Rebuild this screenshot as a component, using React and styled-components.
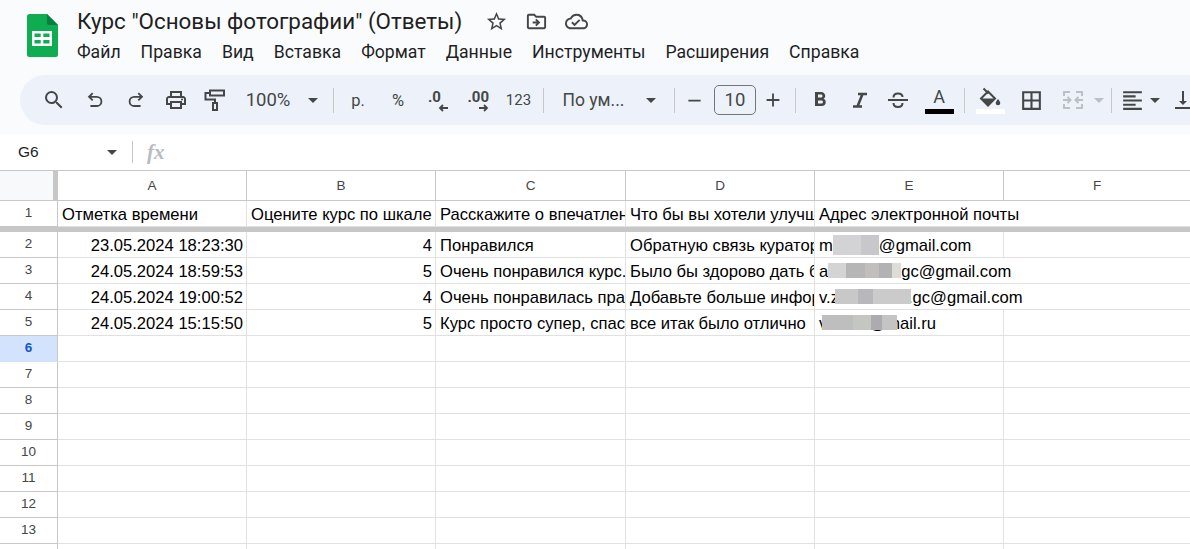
import React from 'react';
import styled, { createGlobalStyle } from 'styled-components';
import {
  MdSearch, MdOutlinePrint, MdFormatBold, MdBorderAll, MdFormatAlignLeft, MdVerticalAlignBottom,
  MdStarBorder, MdOutlineDriveFileMove, MdOutlineCloudDone, MdAdd, MdRemove,
} from 'react-icons/md';

const GlobalStyle = createGlobalStyle`
  html, body { margin: 0; padding: 0; height: 100%; overflow: hidden; background: #f9fbfd; }
  body { font-family: Roboto, "Liberation Sans", sans-serif; }
`;

const Page = styled.div`
  width: 1190px;
  height: 549px;
  overflow: hidden;
  display: flex;
  flex-direction: column;
`;

const Header = styled.header`
  height: 75px;
  display: flex;
  padding-left: 27px;
  flex-shrink: 0;
`;

const Logo = styled.svg`
  width: 31px;
  height: 43px;
  margin-top: 14px;
  flex-shrink: 0;
`;

const TitleBlock = styled.div`
  margin-left: 19px;
  display: flex;
  flex-direction: column;
`;

const TitleRow = styled.div`
  height: 42px;
  display: flex;
  align-items: center;
  color: #444746;
`;

const Title = styled.h1`
  margin: 0 14px 0 0;
  font-size: 22.4px;
  font-weight: 400;
  color: #1f1f1f;
  white-space: nowrap;
`;

const TitleIcon = styled.span`
  width: 40px;
  display: flex;
  justify-content: center;
  font-size: 23px;
  color: #444746;
`;

const Menu = styled.nav`
  display: flex;
  gap: 20px;
  font-size: 17.65px;
  color: #1f1f1f;
`;

const Toolbar = styled.div`
  height: 50px;
  margin-left: 20px;
  border-radius: 25px 0 0 25px;
  background: #edf2fa;
  display: flex;
  align-items: center;
  padding-left: 14px;
  flex-shrink: 0;
  color: #444746;
  white-space: nowrap;
  overflow: hidden;
`;

const Tool = styled.div`
  width: ${p => p.$w || 40}px;
  height: 30px;
  flex-shrink: 0;
  display: flex;
  align-items: center;
  justify-content: center;
  font-size: ${p => p.$size || 24}px;
  color: ${p => p.$muted ? '#bcc0c4' : '#444746'};
`;

const ToolText = styled(Tool)`
  font-size: ${p => p.$size || 18.5}px;
`;

const Sep = styled.div`
  width: 1px;
  height: 25px;
  background: #c7c7c7;
  flex-shrink: 0;
`;

const Caret = styled.span`
  width: 0;
  height: 0;
  flex-shrink: 0;
  border-left: 5px solid transparent;
  border-right: 5px solid transparent;
  border-top: 5px solid ${p => p.$muted ? '#bcc0c4' : '#444746'};
`;

const FontSizeBox = styled.div`
  width: 40px;
  height: 28px;
  border: 1px solid #747775;
  border-radius: 5px;
  flex-shrink: 0;
  display: flex;
  align-items: center;
  justify-content: center;
  font-size: 18.5px;
  color: #444746;
`;

const Decimal = styled.div`
  width: ${p => p.$w}px;
  display: flex;
  flex-direction: column;
  align-items: flex-end;
  font-size: 15px;
  font-weight: 700;
  line-height: 14px;
  color: #444746;
  margin-top: 1px;
`;

const DecimalText = styled.span`
  align-self: flex-start;
`;

const ColorTool = styled.div`
  width: 40px;
  flex-shrink: 0;
  display: flex;
  flex-direction: column;
  align-items: center;
`;

const ColorLetter = styled.span`
  height: 21px;
  font-size: 18px;
  line-height: 20px;
  color: #444746;
`;

const ColorBar = styled.span`
  width: 29px;
  height: 5px;
  margin-top: 1px;
  background: ${p => p.$color};
`;

const FormulaBar = styled.div`
  height: 36px;
  margin-top: 9px;
  background: #fff;
  display: flex;
  align-items: center;
  flex-shrink: 0;
`;

const NameBox = styled.div`
  width: 133px;
  height: 22px;
  padding: 0 15px 0 18px;
  box-sizing: border-box;
  border-right: 1px solid #c7c7c7;
  display: flex;
  align-items: center;
  justify-content: space-between;
  font-size: 15.5px;
  color: #1f1f1f;
  font-family: "Liberation Sans", sans-serif;
`;

const Fx = styled.span`
  margin-left: 14px;
  font-family: "Liberation Serif", serif;
  font-style: italic;
  font-weight: 700;
  font-size: 21px;
  color: #b9bcbf;
`;

const Sheet = styled.div`
  flex: 1;
  background: #fff;
  border-top: 1px solid #c7c7c7;
  font-family: "Liberation Sans", sans-serif;
  overflow: hidden;
`;

const Row = styled.div`
  display: grid;
  grid-template-columns: 58px 189px 189px 190px 189px 189px 187px;
  height: ${p => p.$h || 26}px;
  box-sizing: border-box;
`;

const Corner = styled.div`
  background: #f8f9fa;
  border-right: 5px solid #c7c7c7;
  border-bottom: 1px solid #c7c7c7;
`;

const ColHead = styled.div`
  border-right: 1px solid #c7c7c7;
  border-bottom: 1px solid #c7c7c7;
  display: flex;
  align-items: center;
  justify-content: center;
  font-size: 13.5px;
  color: #444746;
`;

const RowHead = styled.div`
  border-right: 1px solid #c7c7c7;
  border-bottom: 1px solid ${p => p.$active ? '#d3e3fd' : '#c7c7c7'};
  background: ${p => p.$active ? '#d3e3fd' : '#fff'};
  display: flex;
  align-items: center;
  justify-content: center;
  font-size: 13.5px;
  font-weight: ${p => p.$active ? 700 : 400};
  color: ${p => p.$active ? '#0b57d0' : '#444746'};
  padding-bottom: 2px;
  box-sizing: border-box;
`;

const Cell = styled.div`
  border-right: ${p => p.$spill ? 'none' : '1px solid #e1e1e1'};
  border-bottom: 1px solid #e1e1e1;
  padding: 3px 3px 0 4px;
  box-sizing: border-box;
  overflow: ${p => p.$spill ? 'visible' : 'hidden'};
  white-space: nowrap;
  font-size: 16.6px;
  line-height: 22px;
  color: #000;
  text-align: ${p => p.$right ? 'right' : 'left'};
`;

const FreezeLine = styled.div`
  height: 5px;
  background: #c7c7c7;
`;

const Blur = styled.span`
  display: inline-block;
  position: relative;
  z-index: 1;
  width: ${p => p.$w}px;
  height: ${p => p.$h || 15}px;
  margin-left: ${p => p.$ml || 0}px;
  margin-right: ${p => p.$mr || 0}px;
  vertical-align: ${p => p.$va || -1}px;
  background: ${p => p.$bg};
`;

const RollerIcon = () => (
  <svg width="24" height="24" viewBox="0 0 24 24" fill="none" stroke="#444746" strokeWidth="2">
    <path d="M7 2.500h14v5H7z" />
    <path d="M7 5H2.500v6.500h9.500V15" />
    <path d="M10 15h4v7h-4z" />
  </svg>
);

const ItalicIcon = () => (
  <svg width="24" height="24" viewBox="0 0 24 24" fill="none" stroke="#444746" strokeWidth="2.6">
    <path d="M10 6h9M5 18.500h9M14.500 6l-5 12.500" />
  </svg>
);

const StrikeIcon = () => (
  <svg width="24" height="24" viewBox="0 0 24 24" fill="none" stroke="#444746" strokeWidth="2">
    <path d="M2 12h20" />
    <path d="M7.500 9.500C7.500 7 9.500 5.500 12 5.500s4.500 1.200 4.500 3.500" />
    <path d="M7.500 15c0 2.500 2 4 4.500 4s4.500-1.500 4.500-4" />
  </svg>
);

const FillIcon = () => (
  <svg width="24" height="21" viewBox="0 0 24 21">
    <path d="M5.500 1.500l5 5M10 4.500L3 11.500l7 7 7-7z" fill="none" stroke="#444746" strokeWidth="2" />
    <path d="M3 11.500h14l-7 7z" fill="#444746" />
    <path d="M20 12c-1.500 2-2.300 3-2.300 4a2.300 2.300 0 0 0 4.600 0c0-1-.8-2-2.300-4z" fill="#444746" />
  </svg>
);

const MergeIcon = () => (
  <svg width="24" height="24" viewBox="0 0 24 24" fill="none" stroke="#bcc0c4" strokeWidth="2">
    <path d="M3 8V4h6M15 4h6v4M3 16v4h6M15 20h6v-4" />
    <path d="M2 12h7M6.500 9l3 3-3 3M22 12h-7M17.500 9l-3 3 3 3" />
  </svg>
);

const UndoIcon = () => (
  <svg width="22" height="22" viewBox="0 0 24 24" fill="none" stroke="#444746" strokeWidth="2">
    <path d="M9.500 4.500L5.500 8.500l4 4M5.500 8.500H14a5 5 0 0 1 0 10H7" />
  </svg>
);

const RedoIcon = () => (
  <svg width="22" height="22" viewBox="0 0 24 24" fill="none" stroke="#444746" strokeWidth="2">
    <path d="M14.500 4.500l4 4-4 4M18.500 8.500H10a5 5 0 0 0 0 10h7" />
  </svg>
);

const ArrowTiny = ({ left }) => (
  <svg width="10" height="8" viewBox="0 0 10 8" fill="none" stroke="#444746" strokeWidth="1.800">
    {left ? <path d="M10 4H2M5 1L2 4l3 3" /> : <path d="M0 4h8M5 1l3 3-3 3" />}
  </svg>
);

const columns = ['A', 'B', 'C', 'D', 'E', 'F'];

const rows = [
  {
    n: 2, a: '23.05.2024 18:23:30', b: '4', c: 'Понравился', d: 'Обратную связь куратора бы',
    e: <>m<Blur $w={46} $h={20} $va={-4} $bg="linear-gradient(90deg,#d3d3d6 0 60%,#c8c8cc 60% 100%)" />@gmail.com</>,
  },
  {
    n: 3, a: '24.05.2024 18:59:53', b: '5', c: 'Очень понравился курс. Спасибо', d: 'Было бы здорово дать больше',
    e: <>a<Blur $w={73} $bg="linear-gradient(90deg,#d4d4d4 0 25%,#b6b6b6 25% 50%,#c0bfbc 50% 70%,#b2b2b4 70% 88%,#dcdcd8 88% 100%)" />gc@gmail.com</>,
    spill: true,
  },
  {
    n: 4, a: '24.05.2024 19:00:52', b: '4', c: 'Очень понравилась практика и', d: 'Добавьте больше информации',
    e: <>v.z<Blur $w={76} $ml={-4} $mr={-3} $bg="linear-gradient(90deg,#c8c8c8 0 30%,#b8b8bc 30% 50%,#cbcbcb 50% 100%)" />.gc@gmail.com</>,
    spill: true,
  },
  {
    n: 5, a: '24.05.2024 15:15:50', b: '5', c: 'Курс просто супер, спасибо всем', d: 'все итак было отлично',
    e: <>v<Blur $w={75} $ml={-5} $mr={-28} $bg="linear-gradient(90deg,#bebebe 0 42%,#c4c6c2 42% 65%,#acacb0 65% 80%,#c4c4c4 80% 100%)" />@mail.ru</>,
  },
];

const emptyRows = [6, 7, 8, 9, 10, 11, 12, 13, 14];

const App = () => (
  <Page>
    <GlobalStyle />
    <Header>
      <Logo viewBox="0 0 31 43">
        <path d="M2.500 0H20l11 11v29.500a2.500 2.500 0 0 1-2.500 2.500h-26A2.500 2.500 0 0 1 0 40.500V2.500A2.500 2.500 0 0 1 2.500 0z" fill="#0ead52" />
        <path d="M20 0l11 11H22a2 2 0 0 1-2-2z" fill="#0a7d41" />
        <path d="M5 17h20v15H5z M7.500 19.500v3.500h6.200v-3.500z M16.300 19.500v3.500h6.200v-3.500z M7.500 26v3.500h6.200V26z M16.300 26v3.500h6.200V26z" fill="#fff" fillRule="evenodd" />
      </Logo>
      <TitleBlock>
        <TitleRow>
          <Title>Курс "Основы фотографии" (Ответы)</Title>
          <TitleIcon><MdStarBorder /></TitleIcon>
          <TitleIcon><MdOutlineDriveFileMove /></TitleIcon>
          <TitleIcon><MdOutlineCloudDone /></TitleIcon>
        </TitleRow>
        <Menu>
          {['Файл', 'Правка', 'Вид', 'Вставка', 'Формат', 'Данные', 'Инструменты', 'Расширения', 'Справка'].map(m => (
            <span key={m}>{m}</span>
          ))}
        </Menu>
      </TitleBlock>
    </Header>

    <Toolbar>
      <Tool><MdSearch /></Tool>
      <Tool $w={42}><UndoIcon /></Tool>
      <Tool><RedoIcon /></Tool>
      <Tool><MdOutlinePrint /></Tool>
      <Tool $w={37}><RollerIcon /></Tool>
      <ToolText $w={70}>100%</ToolText>
      <Tool $w={20}><Caret /></Tool>
      <Tool $w={10} />
      <Sep />
      <ToolText $w={48} $size={16.5}>р.</ToolText>
      <ToolText $w={32} $size={16.5}>%</ToolText>
      <Tool $w={48}><Decimal $w={20}><DecimalText>.0</DecimalText><ArrowTiny left /></Decimal></Tool>
      <Tool $w={32}><Decimal $w={21}><DecimalText>.00</DecimalText><ArrowTiny /></Decimal></Tool>
      <ToolText $w={49} $size={15}>123</ToolText>
      <Sep />
      <ToolText $w={99} $size={17.5}>По ум...</ToolText>
      <Tool $w={16}><Caret /></Tool>
      <Tool $w={15} />
      <Sep />
      <Tool $w={39} $size={21}><MdRemove /></Tool>
      <FontSizeBox>10</FontSizeBox>
      <Tool $w={34} $size={22}><MdAdd /></Tool>
      <Tool $w={5} />
      <Sep />
      <Tool $w={47}><MdFormatBold /></Tool>
      <Tool $w={34}><ItalicIcon /></Tool>
      <Tool $w={42}><StrikeIcon /></Tool>
      <ColorTool><ColorLetter>A</ColorLetter><ColorBar $color="#000" /></ColorTool>
      <Tool $w={5} />
      <Sep />
      <Tool $w={5} />
      <ColorTool><FillIcon /><ColorBar $color="#fff" /></ColorTool>
      <Tool $w={42} $size={25}><MdBorderAll /></Tool>
      <Tool $w={42}><MergeIcon /></Tool>
      <Tool $w={10}><Caret $muted /></Tool>
      <Tool $w={7} />
      <Sep />
      <Tool $w={40} $size={25}><MdFormatAlignLeft /></Tool>
      <Tool $w={6}><Caret /></Tool>
      <Tool $w={50}><MdVerticalAlignBottom /></Tool>
    </Toolbar>

    <FormulaBar>
      <NameBox>G6<Caret /></NameBox>
      <Fx>fx</Fx>
    </FormulaBar>

    <Sheet>
      <Row $h={30}>
        <Corner />
        {columns.map(c => <ColHead key={c}>{c}</ColHead>)}
      </Row>
      <Row>
        <RowHead>1</RowHead>
        <Cell>Отметка времени</Cell>
        <Cell>Оцените курс по шкале от 1 до 5</Cell>
        <Cell>Расскажите о впечатлениях</Cell>
        <Cell>Что бы вы хотели улучшить</Cell>
        <Cell $spill>Адрес электронной почты</Cell>
        <Cell />
      </Row>
      <FreezeLine />
      {rows.map(r => (
        <Row key={r.n}>
          <RowHead>{r.n}</RowHead>
          <Cell $right>{r.a}</Cell>
          <Cell $right>{r.b}</Cell>
          <Cell>{r.c}</Cell>
          <Cell>{r.d}</Cell>
          <Cell $spill={r.spill}>{r.e}</Cell>
          <Cell />
        </Row>
      ))}
      {emptyRows.map(n => (
        <Row key={n}>
          <RowHead $active={n === 6}>{n}</RowHead>
          {columns.map(c => <Cell key={c} />)}
        </Row>
      ))}
    </Sheet>
  </Page>
);

export default App;
